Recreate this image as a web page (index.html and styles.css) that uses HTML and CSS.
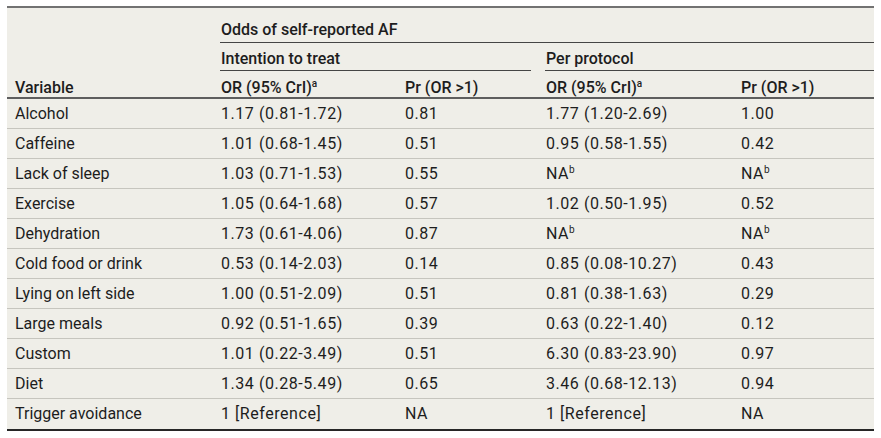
FILE: index.html
```html
<!DOCTYPE html>
<html lang="en">
<head>
<meta charset="utf-8">
<title>Odds of self-reported AF</title>
<link rel="stylesheet" href="styles.css">
</head>
<body>
<table class="tbl">
  <colgroup>
    <col class="c1"><col class="c2"><col class="c3"><col class="c4"><col class="c5">
  </colgroup>
  <thead>
    <tr class="h1">
      <th></th>
      <th colspan="4"><div class="lab">Odds of self-reported AF</div></th>
    </tr>
    <tr class="h2">
      <th></th>
      <th colspan="2"><div class="lab lab-itt">Intention to treat</div></th>
      <th colspan="2"><div class="lab">Per protocol</div></th>
    </tr>
    <tr class="h3">
      <th>Variable</th>
      <th>OR (95% CrI)<sup>a</sup></th>
      <th>Pr (OR &gt;1)</th>
      <th>OR (95% CrI)<sup>a</sup></th>
      <th>Pr (OR &gt;1)</th>
    </tr>
  </thead>
  <tbody>
    <tr><td>Alcohol</td><td>1.17 (0.81-1.72)</td><td>0.81</td><td>1.77 (1.20-2.69)</td><td>1.00</td></tr>
    <tr><td>Caffeine</td><td>1.01 (0.68-1.45)</td><td>0.51</td><td>0.95 (0.58-1.55)</td><td>0.42</td></tr>
    <tr><td>Lack of sleep</td><td>1.03 (0.71-1.53)</td><td>0.55</td><td>NA<sup>b</sup></td><td>NA<sup>b</sup></td></tr>
    <tr><td>Exercise</td><td>1.05 (0.64-1.68)</td><td>0.57</td><td>1.02 (0.50-1.95)</td><td>0.52</td></tr>
    <tr><td>Dehydration</td><td>1.73 (0.61-4.06)</td><td>0.87</td><td>NA<sup>b</sup></td><td>NA<sup>b</sup></td></tr>
    <tr><td>Cold food or drink</td><td>0.53 (0.14-2.03)</td><td>0.14</td><td>0.85 (0.08-10.27)</td><td>0.43</td></tr>
    <tr><td>Lying on left side</td><td>1.00 (0.51-2.09)</td><td>0.51</td><td>0.81 (0.38-1.63)</td><td>0.29</td></tr>
    <tr><td>Large meals</td><td>0.92 (0.51-1.65)</td><td>0.39</td><td>0.63 (0.22-1.40)</td><td>0.12</td></tr>
    <tr><td>Custom</td><td>1.01 (0.22-3.49)</td><td>0.51</td><td>6.30 (0.83-23.90)</td><td>0.97</td></tr>
    <tr><td>Diet</td><td>1.34 (0.28-5.49)</td><td>0.65</td><td>3.46 (0.68-12.13)</td><td>0.94</td></tr>
    <tr class="last"><td>Trigger avoidance</td><td>1 [Reference]</td><td>NA</td><td>1 [Reference]</td><td>NA</td></tr>
  </tbody>
</table>
</body>
</html>
```
FILE: styles.css
```css
html, body {
  margin: 0;
  padding: 0;
  background: #ffffff;
}
body {
  padding: 6px 0 0 7px;
  font-family: Roboto, "Open Sans", "Liberation Sans", sans-serif;
  color: #1d1d1d;
}
.tbl {
  width: 867px;
  table-layout: fixed;
  border-collapse: separate;
  border-spacing: 0;
  background: #efeee8;
  border-top: 2px solid #727272;
  border-bottom: 2px solid #262626;
  font-size: 16px;
}
.c1 { width: 206px; }
.c2 { width: 184px; }
.c3 { width: 141px; }
.c4 { width: 195px; }
.c5 { width: 141px; }

th, td {
  text-align: left;
  padding: 0 0 0 8px;
  white-space: nowrap;
  line-height: 20px;
}
th {
  font-weight: 500;
}
sup {
  font-size: 10px;
  line-height: 0;
  vertical-align: 6px;
}
td sup { font-weight: 400; }

.h1 th, .h2 th {
  padding: 0;
  vertical-align: bottom;
}
.lab {
  margin-left: 7px;
  padding-left: 1px;
  border-bottom: 1px solid #454545;
}
.lab-itt { margin-right: 7px; }
.h1 .lab { padding-top: 12px; padding-bottom: 2px; }
.h2 .lab { padding-top: 6px; padding-bottom: 1px; }
.h3 th {
  padding-top: 8px;
  line-height: 18px;
  vertical-align: top;
  border-bottom: 2px solid #5e5e5e;
}
tbody td {
  padding-top: 5px;
  padding-bottom: 4px;
  border-bottom: 1px solid #c6c5be;
  vertical-align: top;
}
tbody td + td { letter-spacing: 0.55px; }
tbody tr.last td { border-bottom: none; padding-bottom: 5px; }
```
